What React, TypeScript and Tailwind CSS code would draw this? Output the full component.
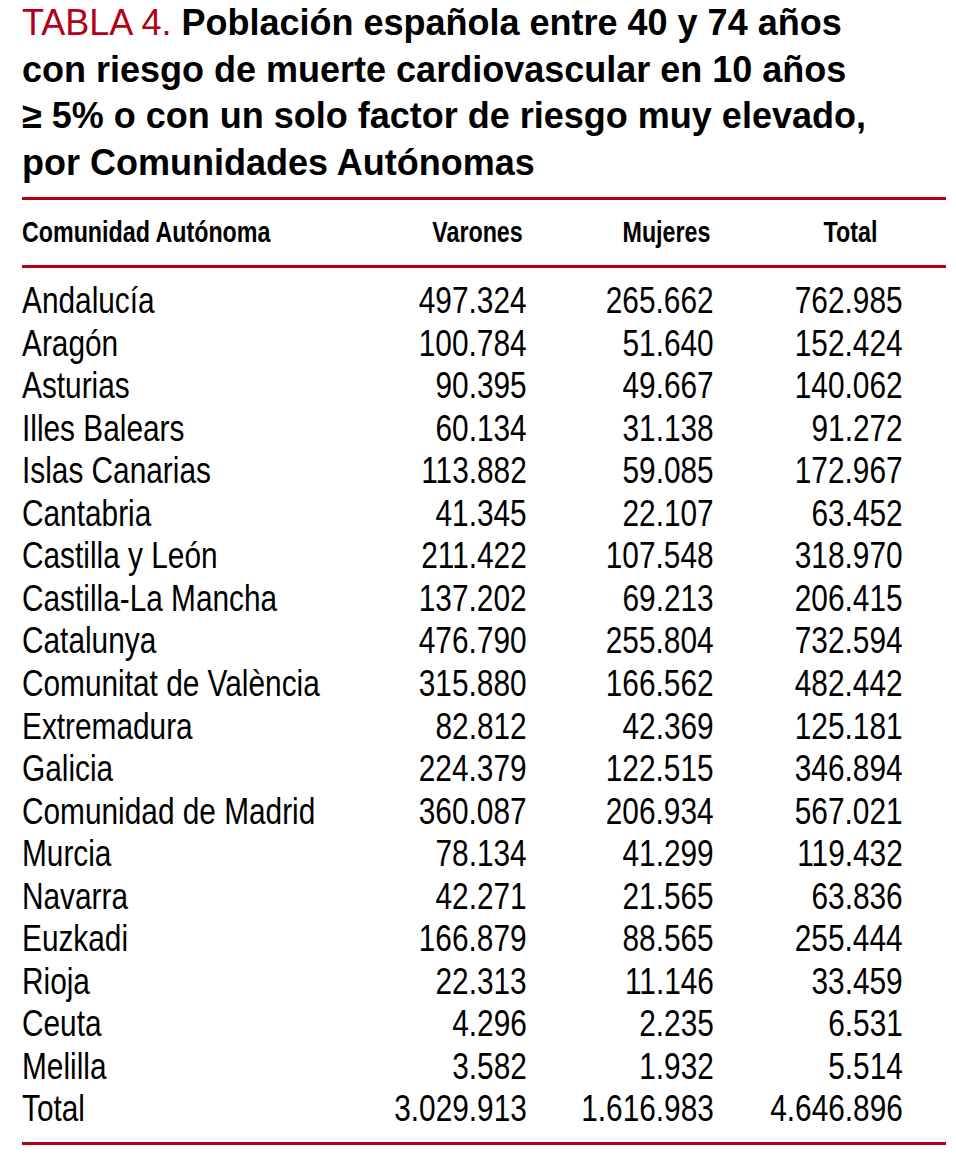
import React from 'react';

type Row = [string, string, string, string];

const ROWS: Row[] = [
  ['Andalucía', '497.324', '265.662', '762.985'],
  ['Aragón', '100.784', '51.640', '152.424'],
  ['Asturias', '90.395', '49.667', '140.062'],
  ['Illes Balears', '60.134', '31.138', '91.272'],
  ['Islas Canarias', '113.882', '59.085', '172.967'],
  ['Cantabria', '41.345', '22.107', '63.452'],
  ['Castilla y León', '211.422', '107.548', '318.970'],
  ['Castilla-La Mancha', '137.202', '69.213', '206.415'],
  ['Catalunya', '476.790', '255.804', '732.594'],
  ['Comunitat de València', '315.880', '166.562', '482.442'],
  ['Extremadura', '82.812', '42.369', '125.181'],
  ['Galicia', '224.379', '122.515', '346.894'],
  ['Comunidad de Madrid', '360.087', '206.934', '567.021'],
  ['Murcia', '78.134', '41.299', '119.432'],
  ['Navarra', '42.271', '21.565', '63.836'],
  ['Euzkadi', '166.879', '88.565', '255.444'],
  ['Rioja', '22.313', '11.146', '33.459'],
  ['Ceuta', '4.296', '2.235', '6.531'],
  ['Melilla', '3.582', '1.932', '5.514'],
  ['Total', '3.029.913', '1.616.983', '4.646.896'],
];

// Condensed look: Arial metrics squeezed horizontally
const Cell: React.FC<{ children: React.ReactNode; right?: boolean; scale?: 'body' | 'head' }> = ({
  children,
  right,
  scale = 'body',
}) => (
  <div className={`whitespace-nowrap ${right ? 'text-right' : ''}`}>
    <span
      className={`inline-block ${scale === 'head' ? 'scale-x-[0.775]' : 'scale-x-[0.795]'} ${
        right ? 'origin-right' : 'origin-left'
      }`}
    >
      {children}
    </span>
  </div>
);

export default function App() {
  return (
    <div className="w-[956px] min-h-[1158px] bg-white pl-[22px] pr-[10px] font-['Liberation_Sans',Arial,sans-serif] text-black">
      {/* Title */}
      <h1 className="text-[36px] leading-[46.67px] font-bold">
        <span className="font-normal text-[#b30016]">TABLA 4. </span>
        Población española entre 40 y 74 años
        <br />
        con riesgo de muerte cardiovascular en 10 años
        <br />
        ≥ 5% o con un solo factor de riesgo muy elevado,
        <br />
        por Comunidades Autónomas
      </h1>

      <div className="mt-[10px] h-[3px] bg-[#b30016]" />

      {/* Header */}
      <div className="grid grid-cols-[300px_205px_187px_189px] h-[65px] items-center text-[30px] leading-none font-bold">
        <Cell scale="head">Comunidad Autónoma</Cell>
        <div className="pr-[4px]">
          <Cell right scale="head">Varones</Cell>
        </div>
        <div className="pr-[4px]">
          <Cell right scale="head">Mujeres</Cell>
        </div>
        <div className="pr-[26px]">
          <Cell right scale="head">Total</Cell>
        </div>
      </div>

      <div className="h-[3px] bg-[#b30016]" />

      {/* Body */}
      <div className="pt-[12px] pb-[12px] text-[37.5px] leading-none">
        {ROWS.map(([name, v, m, t]) => (
          <div key={name} className="grid grid-cols-[300px_205px_187px_189px] h-[42.54px] items-center">
            <Cell>{name}</Cell>
            <Cell right>{v}</Cell>
            <Cell right>{m}</Cell>
            <Cell right>{t}</Cell>
          </div>
        ))}
      </div>

      <div className="h-[3px] bg-[#b30016]" />
    </div>
  );
}
